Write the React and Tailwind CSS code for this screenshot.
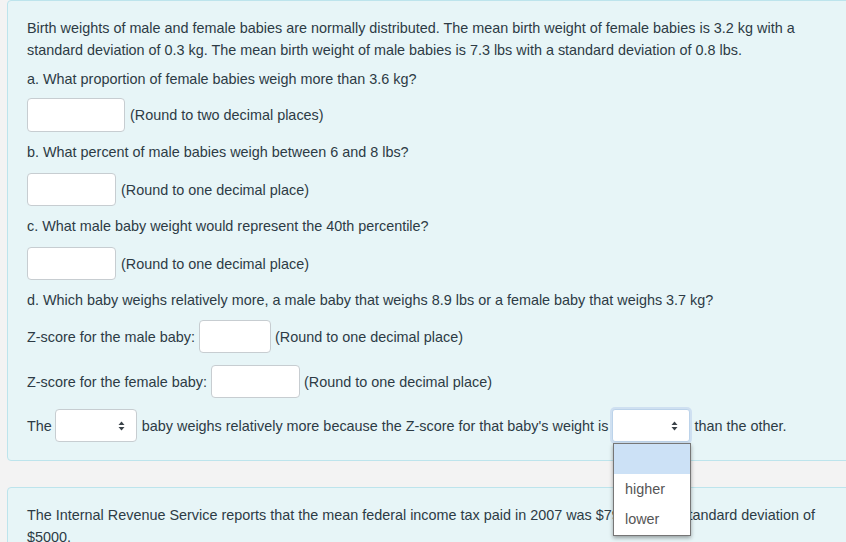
import React from "react";

function Arrows() {
  return (
    <svg width="7" height="10" viewBox="0 0 7 10" className="shrink-0">
      <path d="M3.5 0.5 L6.5 4 L0.5 4 Z" fill="#3a4248" />
      <path d="M0.5 6 L6.5 6 L3.5 9.5 Z" fill="#3a4248" />
    </svg>
  );
}

function Input({ w, h = "h-[33px]" }) {
  return (
    <div className={`${w} ${h} bg-white border border-[#c7cdd1] rounded-[4px] shrink-0`} />
  );
}

export default function App() {
  return (
    <div className="w-[846px] h-[542px] overflow-hidden bg-[#f3f3f3] pl-[7px] font-['Liberation_Sans',Arial,sans-serif] text-[14.4px] text-[#2d3b45] leading-[22px] relative">
      {/* Card 1 */}
      <div className="w-[880px] bg-[#e7f5f7] border border-[#bde4ec] rounded-[4px] pl-[19px] pr-[40px] pt-[16px] pb-[18px]">
        <p>
          Birth weights of male and female babies are normally distributed. The mean birth weight of female babies is 3.2 kg with a standard deviation of 0.3 kg. The mean birth weight of male babies is 7.3 lbs with a standard deviation of 0.8 lbs.
        </p>
        <p className="mt-[7px]">a. What proportion of female babies weigh more than 3.6 kg?</p>
        <div className="mt-[8px] flex items-center gap-[5px]">
          <Input w="w-[98px]" h="h-[34px]" />
          <span>(Round to two decimal places)</span>
        </div>
        <p className="mt-[9px]">b. What percent of male babies weigh between 6 and 8 lbs?</p>
        <div className="mt-[10px] flex items-center gap-[5px]">
          <Input w="w-[89px]" />
          <span>(Round to one decimal place)</span>
        </div>
        <p className="mt-[9px]">c. What male baby weight would represent the 40th percentile?</p>
        <div className="mt-[10px] flex items-center gap-[5px]">
          <Input w="w-[89px]" />
          <span>(Round to one decimal place)</span>
        </div>
        <p className="mt-[9px]">d. Which baby weighs relatively more, a male baby that weighs 8.9 lbs or a female baby that weighs 3.7 kg?</p>
        <div className="mt-[9px] flex items-center gap-[4px]">
          <span>Z-score for the male baby:</span>
          <Input w="w-[72px]" />
          <span>(Round to one decimal place)</span>
        </div>
        <div className="mt-[12px] flex items-center gap-[4px]">
          <span>Z-score for the female baby:</span>
          <Input w="w-[89px]" />
          <span>(Round to one decimal place)</span>
        </div>
        <div className="mt-[11px] flex items-center">
          <span>The</span>
          <div className="ml-[3px] w-[82px] h-[33px] bg-white border border-[#c7cdd1] rounded-[4px] flex items-center justify-end pr-[11px]">
            <Arrows />
          </div>
          <span className="ml-[5px]">baby weighs relatively more because the Z-score for that baby's weight is</span>
          <div className="ml-[4px] w-[78px] h-[33px] bg-white border border-[#bcd3ea] ring-2 ring-[#cfe0f1] rounded-[3px] flex items-center justify-end pr-[11px]">
            <Arrows />
          </div>
          <span className="ml-[4px]">than the other.</span>
        </div>
      </div>

      {/* Card 2 */}
      <div className="mt-[26px] w-[880px] bg-[#e7f5f7] border border-[#bde4ec] rounded-[4px] pl-[19px] pr-[40px] pt-[16px] pb-[18px]">
        <p>
          The Internal Revenue Service reports that the mean federal income tax paid in 2007 was $7900 with a standard deviation of $5000.
        </p>
      </div>

      {/* Native select dropdown overlay */}
      <div className="absolute left-[613px] top-[443px] w-[78px] h-[93px] bg-white border border-[#767676] shadow-[0_2px_4px_rgba(0,0,0,0.35)] flex flex-col">
        <div className="h-[30px] bg-[#cce1f6]" />
        <div className="h-[30px] pl-[11px] flex items-center text-[#555]">higher</div>
        <div className="h-[30px] pl-[11px] flex items-center text-[#555]">lower</div>
      </div>
    </div>
  );
}
